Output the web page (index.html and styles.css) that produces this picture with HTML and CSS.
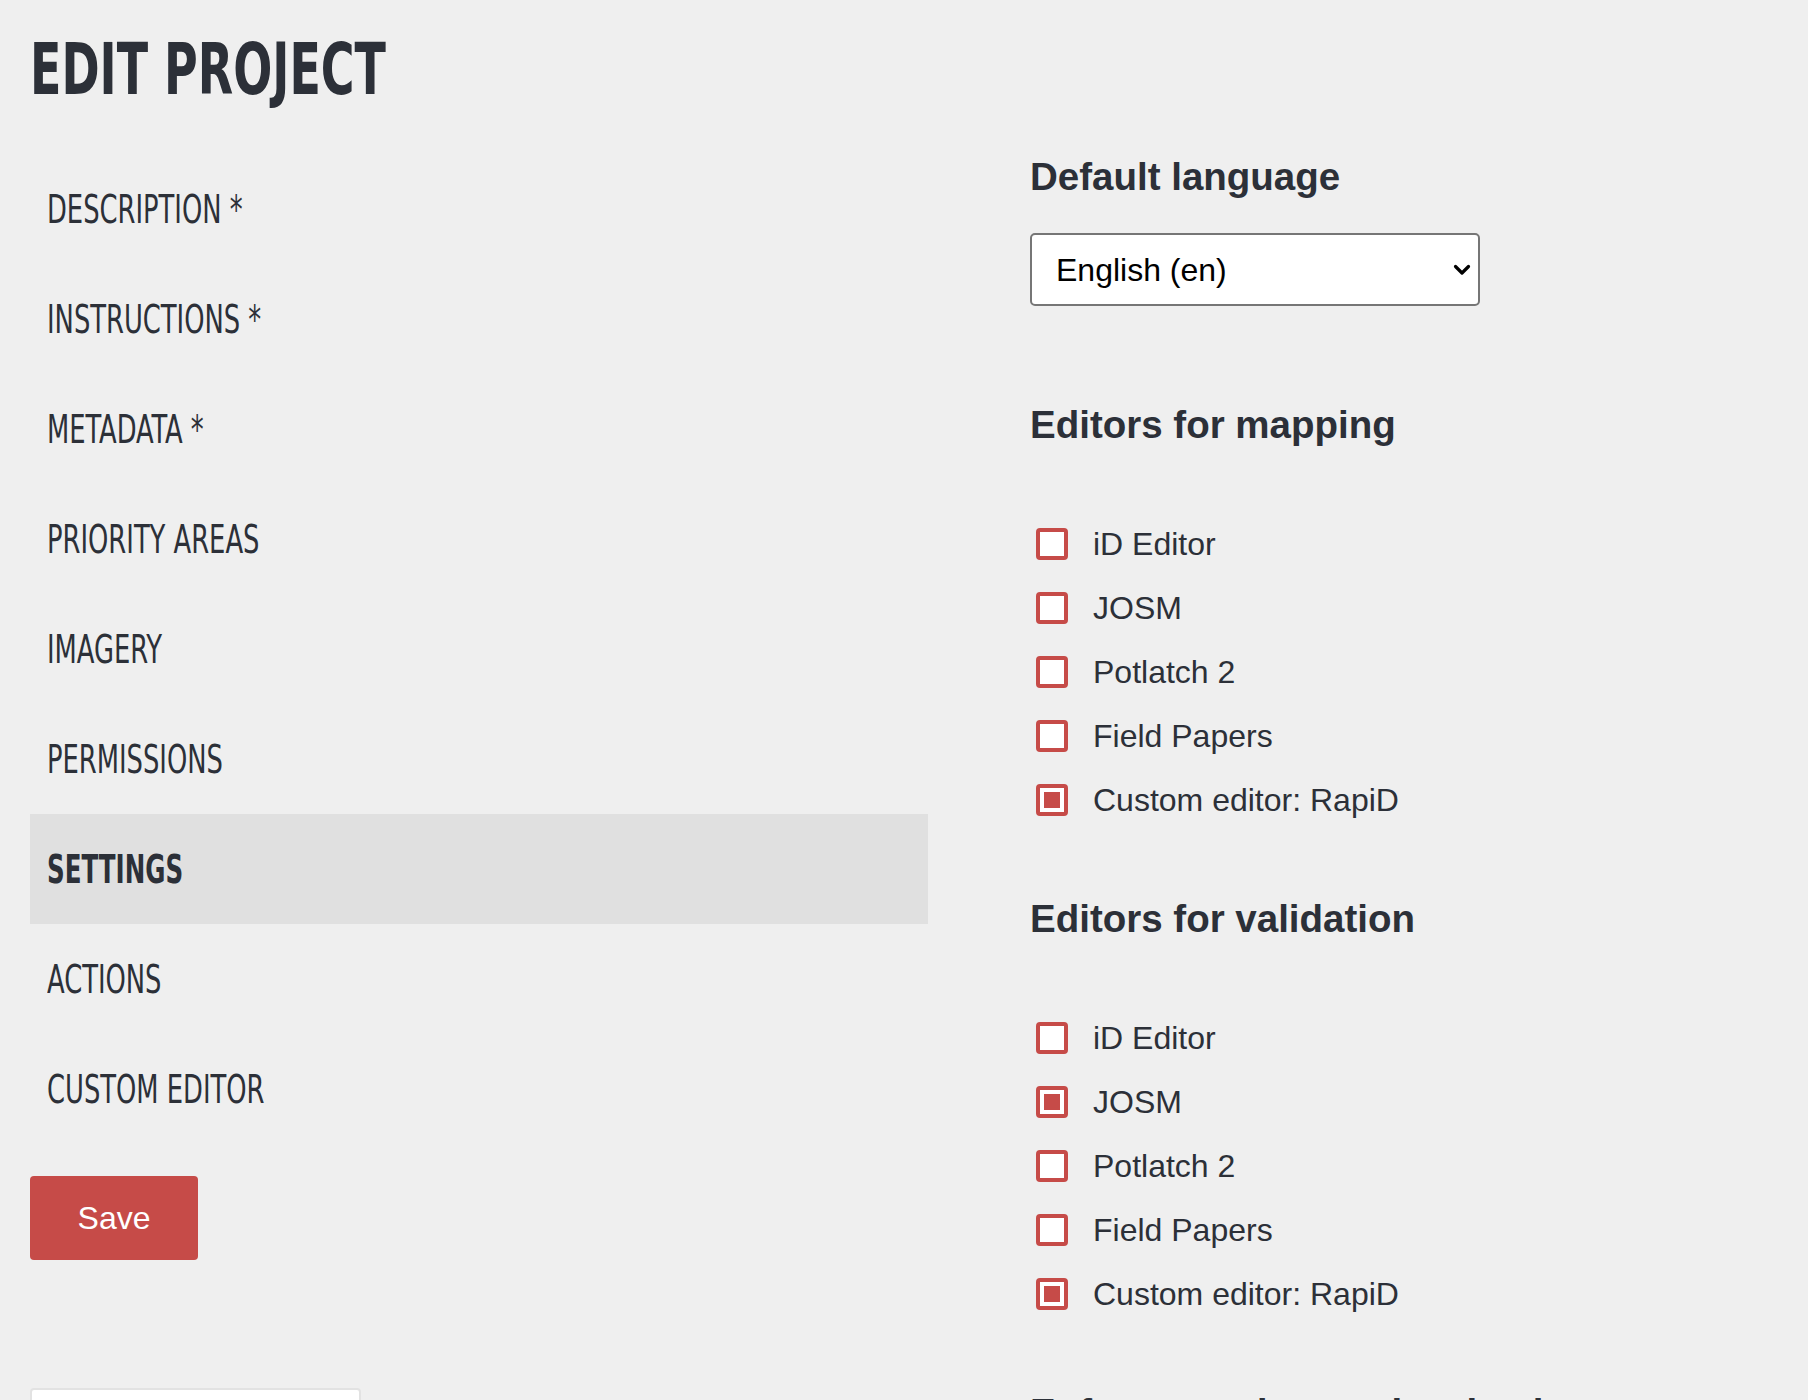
FILE: index.html
```html
<!DOCTYPE html>
<html lang="en">
<head>
<meta charset="utf-8">
<title>Edit project</title>
<link rel="stylesheet" href="styles.css">
</head>
<body>
<div class="page">
  <h2 class="page-title"><span class="title-text">EDIT PROJECT</span></h2>
  <div class="layout">
    <aside class="sidebar">
      <nav class="nav">
        <a class="nav-item"><span class="nav-label">DESCRIPTION *</span></a>
        <a class="nav-item"><span class="nav-label">INSTRUCTIONS *</span></a>
        <a class="nav-item"><span class="nav-label">METADATA *</span></a>
        <a class="nav-item"><span class="nav-label">PRIORITY AREAS</span></a>
        <a class="nav-item"><span class="nav-label">IMAGERY</span></a>
        <a class="nav-item"><span class="nav-label">PERMISSIONS</span></a>
        <a class="nav-item active"><span class="nav-label">SETTINGS</span></a>
        <a class="nav-item"><span class="nav-label">ACTIONS</span></a>
        <a class="nav-item"><span class="nav-label">CUSTOM EDITOR</span></a>
      </nav>
      <button class="save" type="button">Save</button>
      <div class="card"></div>
    </aside>
    <main class="settings">
      <section class="field lang">
        <h3 class="field-title">Default language</h3>
        <div class="select-wrap">
          <select class="select"><option>English (en)</option></select>
          <svg class="chevron" width="18" height="12" viewBox="0 0 18 12"><path d="M2.5 2.5 L9 9 L15.5 2.5" fill="none" stroke="#000" stroke-width="3.2" stroke-linecap="round" stroke-linejoin="round"/></svg>
        </div>
      </section>
      <section class="field">
        <h3 class="field-title">Editors for mapping</h3>
        <ul class="checks">
          <li class="check"><span class="box"></span><span class="check-label">iD Editor</span></li>
          <li class="check"><span class="box"></span><span class="check-label">JOSM</span></li>
          <li class="check"><span class="box"></span><span class="check-label">Potlatch 2</span></li>
          <li class="check"><span class="box"></span><span class="check-label">Field Papers</span></li>
          <li class="check"><span class="box checked"></span><span class="check-label">Custom editor: RapiD</span></li>
        </ul>
      </section>
      <section class="field">
        <h3 class="field-title">Editors for validation</h3>
        <ul class="checks">
          <li class="check"><span class="box"></span><span class="check-label">iD Editor</span></li>
          <li class="check"><span class="box checked"></span><span class="check-label">JOSM</span></li>
          <li class="check"><span class="box"></span><span class="check-label">Potlatch 2</span></li>
          <li class="check"><span class="box"></span><span class="check-label">Field Papers</span></li>
          <li class="check"><span class="box checked"></span><span class="check-label">Custom editor: RapiD</span></li>
        </ul>
      </section>
      <section class="field">
        <h3 class="field-title">Enforce random task selection</h3>
      </section>
    </main>
  </div>
</div>
</body>
</html>
```
FILE: styles.css
```css
html, body {
  margin: 0;
  padding: 0;
  height: 1400px;
  overflow: hidden;
  background: #efefef;
  color: #2c3038;
  font-family: "Liberation Sans", Arial, sans-serif;
}

.page {
  padding: 0 30px;
}

.page-title {
  margin: 0;
  padding-top: 34px;
  margin-bottom: 49px;
  font-family: "Liberation Sans Narrow", "DejaVu Sans Condensed", "Liberation Sans", sans-serif;
  font-weight: bold;
  font-size: 71px;
  line-height: 71px;
  color: #2c3038;
  white-space: nowrap;
}

.title-text {
  display: inline-block;
  transform: scaleX(0.72);
  transform-origin: 0 50%;
}

.layout {
  display: grid;
  grid-template-columns: 898px 1fr;
  column-gap: 102px;
}

.nav {
  display: flex;
  flex-direction: column;
}

.nav-item {
  display: flex;
  align-items: center;
  height: 110px;
  padding-left: 17px;
  font-family: "Liberation Sans Narrow", "DejaVu Sans Condensed", "Liberation Sans", sans-serif;
  font-size: 39px;
  line-height: 39px;
  color: #2c3038;
  white-space: nowrap;
  cursor: pointer;
}

.nav-label {
  display: inline-block;
  transform: scaleX(0.735);
  transform-origin: 0 50%;
}

.nav-item.active {
  background: #e0e0e0;
  font-weight: bold;
}

.nav-item.active .nav-label {
  transform: scaleX(0.7);
}

.save {
  display: flex;
  align-items: center;
  justify-content: center;
  margin-top: 32px;
  width: 168px;
  height: 84px;
  padding: 0;
  border: none;
  border-radius: 4px;
  background: #c64b48;
  color: #ffffff;
  font-family: "Liberation Sans", Arial, sans-serif;
  font-size: 32px;
}

.card {
  margin-top: 128px;
  width: 331px;
  height: 80px;
  box-sizing: border-box;
  background: #ffffff;
  border: 2px solid #e2e2e2;
  border-radius: 4px;
}

.settings {
  display: flex;
  flex-direction: column;
}

.field-title {
  margin: 0 0 67px 0;
  font-family: "Liberation Sans", Arial, sans-serif;
  font-weight: bold;
  font-size: 38.5px;
  line-height: 40px;
  color: #2c3038;
  white-space: nowrap;
}

.field {
  margin-bottom: 67px;
}

.field.lang {
  margin-bottom: 99px;
}

.field.lang .field-title {
  margin-top: 3px;
  margin-bottom: 36px;
}

.select-wrap {
  position: relative;
  width: 450px;
  height: 73px;
}

.select {
  appearance: none;
  -webkit-appearance: none;
  width: 100%;
  height: 100%;
  box-sizing: border-box;
  margin: 0;
  padding: 0 0 0 24px;
  border: 2px solid #767676;
  border-radius: 5px;
  background: #ffffff;
  color: #000000;
  font-family: "Liberation Sans", Arial, sans-serif;
  font-size: 32px;
}

.chevron {
  position: absolute;
  right: 9px;
  top: 31px;
  pointer-events: none;
}

.checks {
  list-style: none;
  margin: 0;
  padding: 0;
}

.check {
  display: flex;
  align-items: center;
  height: 64px;
  padding-left: 6px;
}

.box {
  display: flex;
  align-items: center;
  justify-content: center;
  flex: none;
  width: 32px;
  height: 32px;
  box-sizing: border-box;
  margin-right: 25px;
  border: 4px solid #c64b48;
  border-radius: 4px;
  background: #ffffff;
}

.box.checked::after {
  content: "";
  width: 16px;
  height: 16px;
  background: #c64b48;
}

.check-label {
  font-family: "Liberation Sans", Arial, sans-serif;
  font-size: 32px;
  line-height: 32px;
  color: #2c3038;
  white-space: nowrap;
}
```
